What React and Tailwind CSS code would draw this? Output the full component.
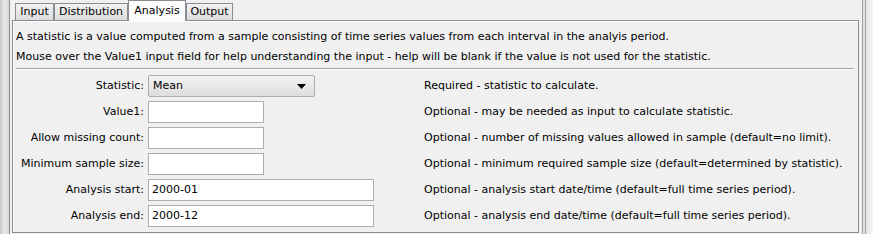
import React from 'react';

const font = { fontFamily: '"DejaVu Sans", Verdana, sans-serif' };

const rows = [
  { label: 'Statistic:', kind: 'select', value: 'Mean', desc: 'Required - statistic to calculate.' },
  { label: 'Value1:', kind: 'short', value: '', desc: 'Optional - may be needed as input to calculate statistic.' },
  { label: 'Allow missing count:', kind: 'short', value: '', desc: 'Optional - number of missing values allowed in sample (default=no limit).' },
  { label: 'Minimum sample size:', kind: 'short', value: '', desc: 'Optional - minimum required sample size (default=determined by statistic).' },
  { label: 'Analysis start:', kind: 'long', value: '2000-01', desc: 'Optional - analysis start date/time (default=full time series period).' },
  { label: 'Analysis end:', kind: 'long', value: '2000-12', desc: 'Optional - analysis end date/time (default=full time series period).' },
];

function Tab({ label, active, width }) {
  if (active) {
    return (
      <div className={`relative z-10 -mb-px flex h-[21px] items-start justify-center border border-b-0 border-[#898c95] bg-[#fbfbfb] pt-[2px] text-[11px] text-black ${width}`}>
        {label}
      </div>
    );
  }
  return (
    <div className={`mt-[3px] flex h-[17px] items-center justify-center border border-b-0 border-[#898c95] bg-gradient-to-b from-[#f2f2f2] to-[#dcdcdc] text-[11px] text-black ${width}`}>
      {label}
    </div>
  );
}

function Control({ kind, value }) {
  if (kind === 'select') {
    return (
      <div className="flex h-[22px] w-[167px] items-center justify-between rounded-[2px] border border-[#acacac] bg-gradient-to-b from-[#f2f2f2] to-[#dddddd] pl-[4px] pr-[8px] text-[11px]">
        <span>{value}</span>
        <svg width="9" height="5" viewBox="0 0 9 5"><path d="M0 0h9L4.5 5z" fill="#000" /></svg>
      </div>
    );
  }
  return (
    <div className={`flex h-[22px] items-center border border-[#abadb3] bg-white pl-[3px] text-[11px] ${kind === 'long' ? 'w-[226px]' : 'w-[116px]'}`}>
      {value}
    </div>
  );
}

export default function App() {
  return (
    <div className="flex h-[234px] w-[873px] overflow-hidden bg-[#f0f0f0] text-black" style={font}>
      <div className="flex w-[12px] shrink-0">
        <div className="w-[9px] bg-gradient-to-r from-[#c8c8c8] via-[#e8e8e8] to-[#d8d8d8]" />
        <div className="w-px bg-[#8e8e8e]" />
        <div className="w-[2px] bg-[#f0f0f0]" />
      </div>

      <div className="flex w-[847px] shrink-0 flex-col">
        <div className="flex h-[20px] items-end pl-[3px]">
          <Tab label="Input" width="w-[39px]" />
          <Tab label="Distribution" width="w-[74px]" />
          <Tab label="Analysis" width="w-[58px]" active />
          <Tab label="Output" width="w-[47px]" />
        </div>
        <div className="h-[213px] border border-[#898c95] bg-[#f0f0f0] px-[3px] pt-[6px] shadow-[inset_1px_1px_0_#ffffff]">
          <div className="text-[11px] leading-[20px]">
            <p>A statistic is a value computed from a sample consisting of time series values from each interval in the analyis period.</p>
            <p>Mouse over the Value1 input field for help understanding the input - help will be blank if the value is not used for the statistic.</p>
          </div>
          <div className="mt-[1px] mr-[1px] border-t border-b border-t-[#a0a0a0] border-b-white" />
          <div className="mt-[5px] grid grid-cols-[128px_272px_1fr] gap-x-[4px] gap-y-[4px]">
            {rows.map((r) => (
              <React.Fragment key={r.label}>
                <div className="flex h-[22px] items-center justify-end whitespace-nowrap text-[11px]">{r.label}</div>
                <div className="flex h-[22px] items-center">
                  <Control kind={r.kind} value={r.value} />
                </div>
                <div className="flex h-[22px] items-center whitespace-nowrap text-[11px]">{r.desc}</div>
              </React.Fragment>
            ))}
          </div>
        </div>
      </div>

      <div className="flex flex-1">
        <div className="w-[3px]" />
        <div className="w-px bg-[#a0a0a0]" />
        <div className="w-[2px] bg-[#e2e2e2]" />
        <div className="w-px bg-[#a0a0a0]" />
        <div className="flex-1 bg-gradient-to-r from-[#e6e6e6] to-[#f4f4f4]" />
      </div>
    </div>
  );
}
